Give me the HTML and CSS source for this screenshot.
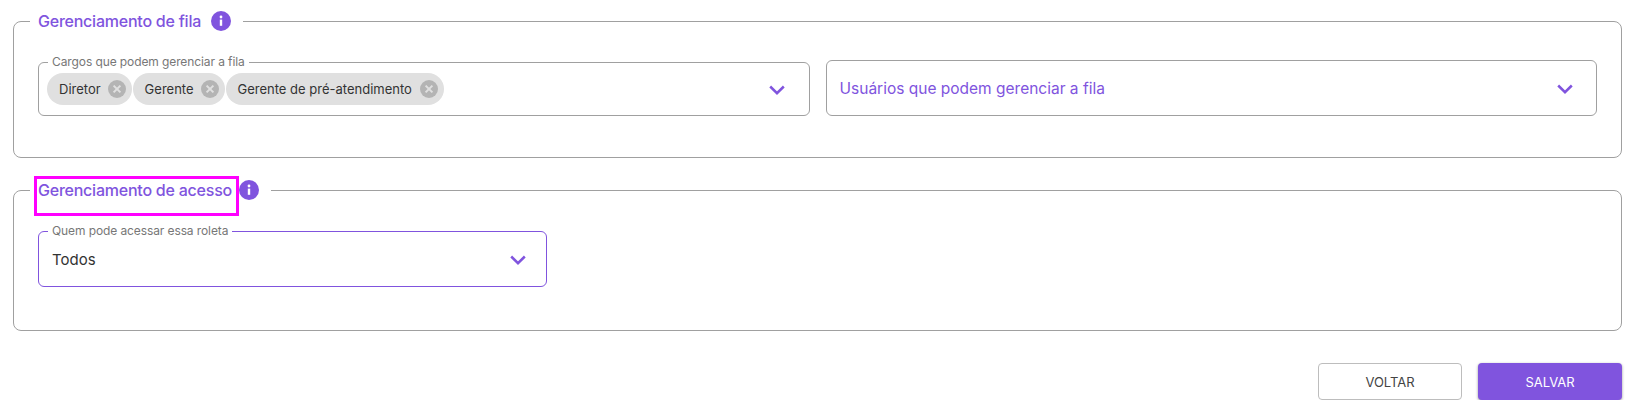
FILE: index.html
```html
<!DOCTYPE html>
<html lang="pt-BR">
<head>
  <meta charset="UTF-8">
  <meta name="viewport" content="width=device-width, initial-scale=1.0">
  <title>Roleta</title>
  <link rel="stylesheet" href="styles.css">
</head>
<body>
  <fieldset class="section">
    <legend class="section-legend">
      <span class="section-title">Gerenciamento de fila</span>
      <svg class="info" viewBox="0 0 20 20"><circle cx="10" cy="10" r="10" fill="#8054de"/><rect x="8.8" y="8.6" width="2.4" height="6.2" fill="#fff"/><circle cx="10" cy="6" r="1.4" fill="#fff"/></svg>
    </legend>
    <div class="section-row">
      <fieldset class="field">
        <legend class="field-legend">Cargos que podem gerenciar a fila</legend>
        <div class="field-body">
          <div class="chips">
            <span class="chip chip-short">Diretor
              <svg class="chip-x" viewBox="0 0 18 18"><circle cx="9" cy="9" r="9" fill="#b4b4b4"/><path d="M5.6 5.6l6.8 6.8M12.4 5.6l-6.8 6.8" stroke="#e0e0e0" stroke-width="2"/></svg>
            </span>
            <span class="chip chip-short">Gerente
              <svg class="chip-x" viewBox="0 0 18 18"><circle cx="9" cy="9" r="9" fill="#b4b4b4"/><path d="M5.6 5.6l6.8 6.8M12.4 5.6l-6.8 6.8" stroke="#e0e0e0" stroke-width="2"/></svg>
            </span>
            <span class="chip">Gerente de pré-atendimento
              <svg class="chip-x" viewBox="0 0 18 18"><circle cx="9" cy="9" r="9" fill="#b4b4b4"/><path d="M5.6 5.6l6.8 6.8M12.4 5.6l-6.8 6.8" stroke="#e0e0e0" stroke-width="2"/></svg>
            </span>
          </div>
          <svg class="chevron" viewBox="0 0 16 10"><path d="M1.2 1.5L8 8.2l6.8-6.7" fill="none" stroke="#8054de" stroke-width="2.5"/></svg>
        </div>
      </fieldset>
      <fieldset class="field field-nolabel">
        <div class="field-body">
          <span class="placeholder">Usuários que podem gerenciar a fila</span>
          <svg class="chevron" viewBox="0 0 16 10"><path d="M1.2 1.5L8 8.2l6.8-6.7" fill="none" stroke="#8054de" stroke-width="2.5"/></svg>
        </div>
      </fieldset>
    </div>
  </fieldset>

  <fieldset class="section section-access">
    <legend class="section-legend section-legend-tight">
      <span class="section-title">Gerenciamento de acesso<span class="highlight"></span></span>
      <svg class="info" viewBox="0 0 20 20"><circle cx="10" cy="10" r="10" fill="#8054de"/><rect x="8.8" y="8.6" width="2.4" height="6.2" fill="#fff"/><circle cx="10" cy="6" r="1.4" fill="#fff"/></svg>
    </legend>
    <fieldset class="field field-active">
      <legend class="field-legend">Quem pode acessar essa roleta</legend>
      <div class="field-body field-body-value">
        <span class="value">Todos</span>
        <svg class="chevron" viewBox="0 0 16 10"><path d="M1.2 1.5L8 8.2l6.8-6.7" fill="none" stroke="#8054de" stroke-width="2.5"/></svg>
      </div>
    </fieldset>
  </fieldset>

  <div class="actions">
    <button class="btn btn-back">VOLTAR</button>
    <button class="btn btn-save">SALVAR</button>
  </div>
</body>
</html>
```

FILE: styles.css
```css
body {
  margin: 0;
  padding: 9px 12px 0 13px;
  background: #fff;
  font-family: Inter, "Open Sans", sans-serif;
  color: #333;
}
fieldset {
  margin: 0;
  min-width: 0;
}
legend {
  padding: 0;
}
.section {
  border: 1px solid #a0a0a0;
  border-radius: 8px;
  padding: 22px 24px 41px;
}
.section-access {
  margin-top: 20px;
  padding-bottom: 43px;
}
.section-legend {
  display: flex;
  align-items: center;
  gap: 10px;
  height: 24px;
  margin-left: -8px;
  padding: 0 12px 0 8px;
}
.section-legend-tight {
  gap: 7px;
}
.section-title {
  position: relative;
  color: #8054de;
  font-size: 16px;
  font-weight: 500;
  line-height: 24px;
  letter-spacing: -0.23px;
}
.highlight {
  position: absolute;
  left: -4px;
  top: -2px;
  width: 199px;
  height: 34px;
  border: 3px solid #f0f;
}
.info {
  width: 20px;
  height: 20px;
}
.section-row {
  display: grid;
  grid-template-columns: 1fr 1fr;
  gap: 16px;
  align-items: end;
}
.field {
  border: 1px solid #a0a0a0;
  border-radius: 6px;
  padding: 0;
}
.field-active {
  width: 507px;
  border-color: #8054de;
}
.field-legend {
  height: 14px;
  margin-left: 9px;
  padding: 0 4px;
  color: #777;
  font-size: 12px;
  line-height: 14px;
  letter-spacing: -0.1px;
}
.field-body {
  display: flex;
  align-items: center;
  justify-content: space-between;
  padding: 4px 24px 10px 8px;
}
.field-nolabel .field-body {
  height: 54px;
  padding: 0 23px 0 13px;
  box-sizing: border-box;
}
.field-body-value {
  height: 48px;
  padding: 0 20px 6px 13px;
  box-sizing: border-box;
}
.chips {
  display: flex;
  gap: 1px;
}
.chip {
  display: flex;
  align-items: center;
  gap: 8px;
  height: 32px;
  padding: 0 6px 0 12px;
  border-radius: 16px;
  background: #e0e0e0;
  color: #333;
  font-size: 13px;
}
.chip-short {
  gap: 7px;
}
.chip-x {
  width: 18px;
  height: 18px;
}
.chevron {
  width: 16px;
  height: 10px;
  margin-top: 1px;
}
.placeholder {
  color: #8054de;
  font-size: 15.5px;
}
.value {
  color: #333;
  font-size: 15px;
}
.actions {
  display: flex;
  justify-content: flex-end;
  gap: 16px;
  margin-top: 32px;
}
.btn {
  width: 144px;
  height: 37px;
  border-radius: 4px;
  font-family: Inter, "Open Sans", sans-serif;
  font-size: 13px;
}
.btn-back {
  border: 1px solid #bdbdbd;
  background: #fff;
  color: #444;
}
.btn-save {
  border: 0;
  background: #8054de;
  color: #fff;
  box-shadow: 0 1px 3px rgba(0, 0, 0, 0.4);
}
```
